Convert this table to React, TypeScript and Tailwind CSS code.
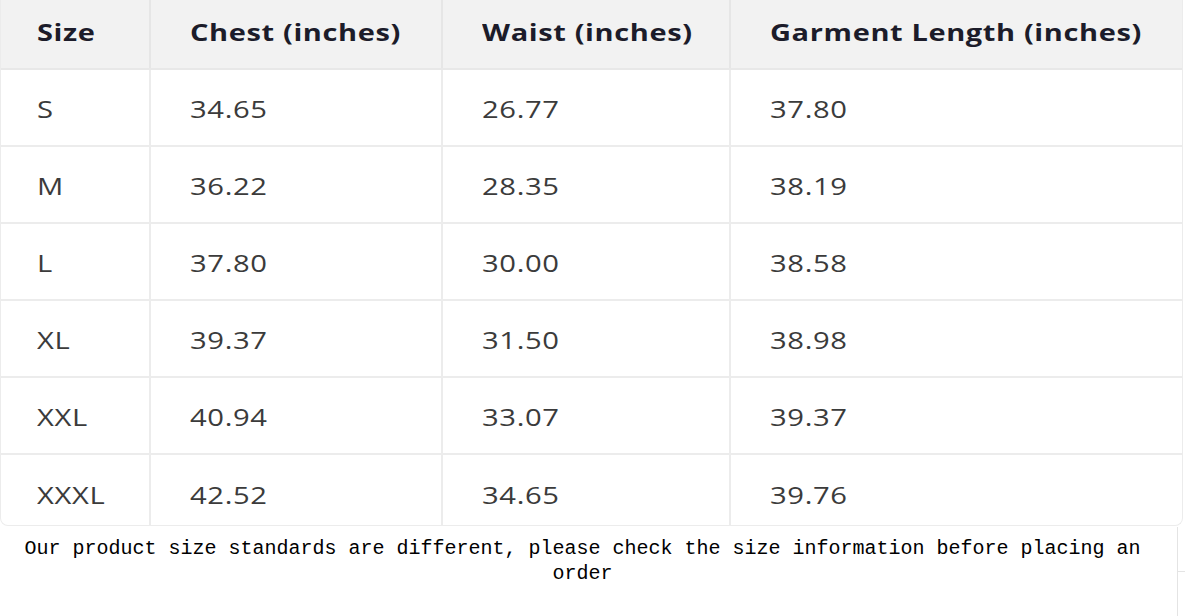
const headers = ['Size', 'Chest (inches)', 'Waist (inches)', 'Garment Length (inches)']

const rows = [
  ['S', '34.65', '26.77', '37.80'],
  ['M', '36.22', '28.35', '38.19'],
  ['L', '37.80', '30.00', '38.58'],
  ['XL', '39.37', '31.50', '38.98'],
  ['XXL', '40.94', '33.07', '39.37'],
  ['XXXL', '42.52', '34.65', '39.76'],
]

const cols = 'grid grid-cols-[148px_292px_288px_1fr]'

export default function App() {
  return (
    <div className="w-[1185px] h-[616px] bg-white overflow-hidden relative">
      <div className="w-[1183px] h-[526px] overflow-hidden rounded-b-lg border-x border-b border-[#ececec] font-['Open_Sans',sans-serif]">
        {/* header */}
        <div className={`${cols} h-[70px] bg-[#f2f2f2] border-b-2 border-[#e8e8e8]`}>
          {headers.map((h, i) => (
            <div
              key={h}
              className={`flex items-center pb-[4px] text-[23px] font-bold tracking-[0.5px] text-[#1c1c2a] ${i > 0 ? 'pl-[39px] border-l-2 border-[#e6e6e6]' : 'pl-[36px]'}`}
            >
              <span className="inline-block origin-left scale-x-[1.26] whitespace-nowrap">{h}</span>
            </div>
          ))}
        </div>

        {/* body */}
        {rows.map((r, ri) => (
          <div
            key={r[0]}
            className={`${cols} h-[77px] ${ri < rows.length - 1 ? 'border-b-2 border-[#ececec]' : ''}`}
          >
            {r.map((c, i) => (
              <div
                key={i}
                className={`flex items-center pt-[3px] text-[23px] tracking-[0.5px] text-[#3b3b3b] ${i > 0 ? 'pl-[39px] border-l-2 border-[#ececec]' : 'pl-[36px]'}`}
              >
                <span className="inline-block origin-left scale-x-[1.27] whitespace-nowrap">{c}</span>
              </div>
            ))}
          </div>
        ))}
      </div>

      <div className="w-[1165px] pt-[10px] text-center text-[20px] leading-[25px] text-black font-['Liberation_Mono',monospace]">
        Our product size standards are different, please check the size information before placing an order
      </div>

      {/* faint frame lines at the right edge */}
      <div className="absolute left-[1177px] top-[527px] h-[89px] w-px bg-[#e4e4e4]" />
      <div className="absolute left-[1177px] top-[571px] h-px w-[8px] bg-[#e4e4e4]" />
    </div>
  )
}
